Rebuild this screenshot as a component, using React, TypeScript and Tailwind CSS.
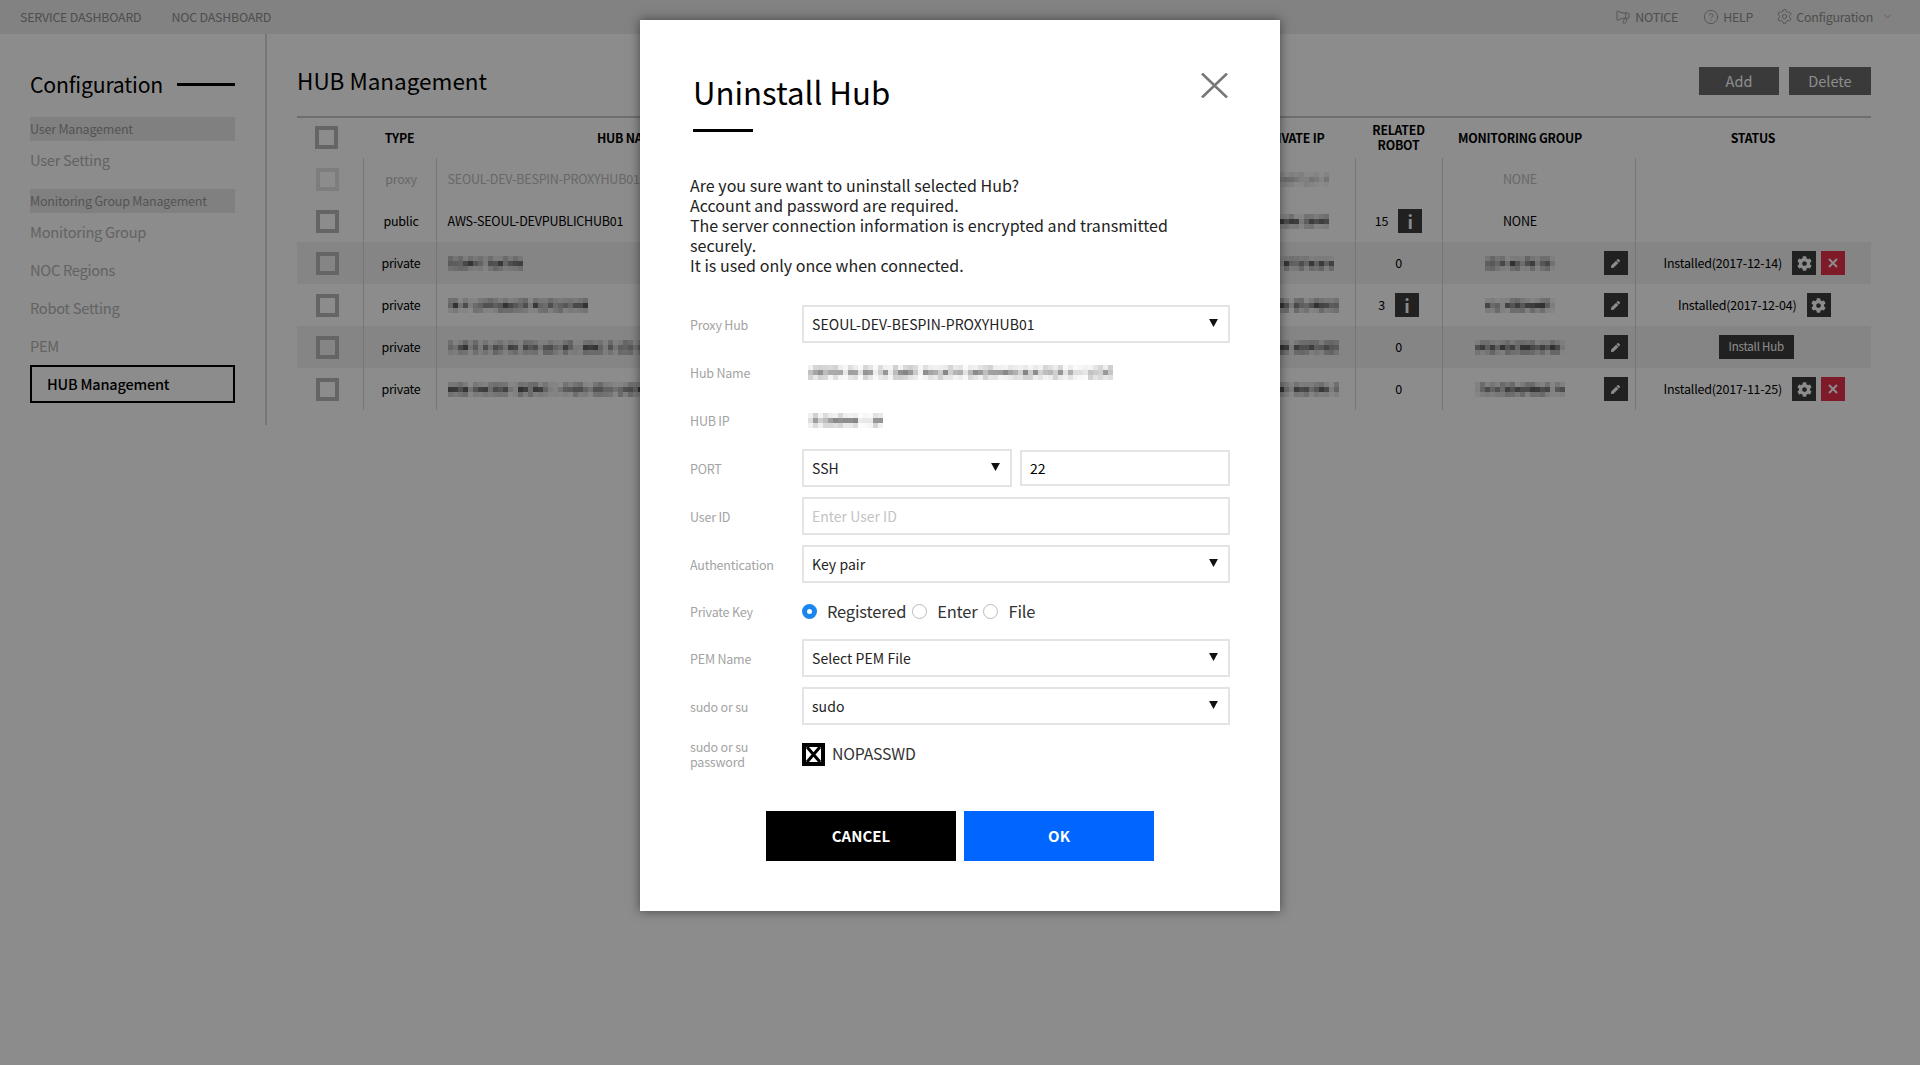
// App.tsx
import React from "react";
import { ChevronDown, CircleHelp, Megaphone, Settings } from "lucide-react";
import { FaCog, FaPen } from "react-icons/fa";

// pixel mosaic for the values that are blurred out in the screenshot
const Redacted: React.FC<{ width: number; seed: number; light?: boolean }> = ({ width, seed, light }) => {
  const cols = Math.floor(width / 5);
  const noise = (n: number) => {
    const x = Math.sin(seed * 37.7 + n * 12.9898) * 43758.5453;
    return x - Math.floor(x);
  };
  const cells = [...Array(cols * 3)].map((_, i) => {
    const col = i % cols;
    const row = Math.floor(i / cols);
    // every few columns the "text" has a gap between words
    const gap = noise(col + 500) < 0.18 ? 0.3 : 1;
    const base = row === 1 ? 0.22 + noise(i) * 0.42 : 0.05 + noise(i) * 0.2;
    return (light ? base * 0.75 : base) * gap;
  });
  return (
    <div className="grid shrink-0 blur-[0.6px]" style={{ gridTemplateColumns: `repeat(${cols}, 5px)` }}>
      {cells.map((o, i) => (
        <span key={i} className="block h-[5px] bg-black" style={{ opacity: o }} />
      ))}
    </div>
  );
};

const IconBtn: React.FC<{ red?: boolean; children: React.ReactNode }> = ({ red, children }) => (
  <span className={`flex h-6 w-6 shrink-0 items-center justify-center text-white ${red ? "bg-[#e8304a]" : "bg-[#3c3c3c]"}`}>
    {children}
  </span>
);

const CheckBox = () => <span className="block h-[23px] w-[23px] border-[4px] border-[#b8b8b8]" />;

const InfoBtn = () => <IconBtn><span className="text-[18px] font-bold leading-none">i</span></IconBtn>;
const PenBtn = () => <IconBtn><FaPen className="h-[9px] w-[9px]" /></IconBtn>;
const GearBtn = () => <IconBtn><FaCog className="h-[15px] w-[15px]" /></IconBtn>;
const CloseBtn = () => (
  <IconBtn red>
    <svg viewBox="0 0 10 10" className="h-[10px] w-[10px]"><path d="M1 1l8 8M9 1l-8 8" stroke="currentColor" strokeWidth="2" /></svg>
  </IconBtn>
);

interface HubRow {
  type: string;
  hub: React.ReactNode;
  ip: number;
  robot?: string;
  info?: boolean;
  group: React.ReactNode;
  edit?: boolean;
  status?: React.ReactNode;
  disabled?: boolean;
}

const Installed: React.FC<{ date: string; remove?: boolean }> = ({ date, remove }) => (
  <div className="flex items-center justify-center pl-[2px]">
    <span className="mr-[10px]">Installed({date})</span>
    <GearBtn />
    {remove && <span className="ml-[5px]"><CloseBtn /></span>}
  </div>
);

const rows: HubRow[] = [
  { type: "proxy", hub: "SEOUL-DEV-BESPIN-PROXYHUB01", ip: 60, group: "NONE", disabled: true },
  { type: "public", hub: "AWS-SEOUL-DEVPUBLICHUB01", ip: 60, robot: "15", info: true, group: "NONE" },
  { type: "private", hub: <Redacted width={75} seed={1} />, ip: 65, robot: "0", group: <Redacted width={70} seed={5} />, edit: true, status: <Installed date="2017-12-14" remove /> },
  { type: "private", hub: <Redacted width={140} seed={2} />, ip: 70, robot: "3", info: true, group: <Redacted width={70} seed={6} />, edit: true, status: <Installed date="2017-12-04" /> },
  {
    type: "private",
    hub: <Redacted width={210} seed={3} />,
    ip: 70,
    robot: "0",
    group: <Redacted width={90} seed={7} />,
    edit: true,
    status: <div className="flex justify-center pl-[6px]"><span className="flex h-6 w-[75px] items-center justify-center bg-[#3c3c3c] text-[11.5px] text-white">Install Hub</span></div>,
  },
  { type: "private", hub: <Redacted width={210} seed={4} />, ip: 70, robot: "0", group: <Redacted width={90} seed={8} />, edit: true, status: <Installed date="2017-11-25" remove /> },
];

const NavGroup: React.FC<{ children: React.ReactNode }> = ({ children }) => (
  <div className="flex h-6 items-center bg-[#e9e9e9] text-[12.5px] tracking-[-0.2px] text-[#9a9a9a]">{children}</div>
);

const NavItem: React.FC<{ children: React.ReactNode }> = ({ children }) => (
  <div className="flex h-[38px] items-center text-[14.7px] tracking-[-0.3px] text-[#b4b4b4]">{children}</div>
);

const Field: React.FC<{ label: React.ReactNode; children: React.ReactNode; h?: string }> = ({ label, children, h = "h-[38px]" }) => (
  <div className={`flex items-center ${h}`}>
    <div className="w-[112px] shrink-0 text-[12.5px] leading-[15px] tracking-[-0.2px] text-[#a3a3a3]">{label}</div>
    <div className="flex min-w-0 flex-1 items-center">{children}</div>
  </div>
);

const Select: React.FC<{ value: string; className?: string }> = ({ value, className = "flex-1" }) => (
  <div className={`flex h-[38px] items-center justify-between border-2 border-[#e4e4e4] pl-[8px] pr-[10px] text-[14px] tracking-[0.05px] text-[#222] ${className}`}>
    <span>{value}</span>
    <svg viewBox="0 0 10 9" className="mb-[3px] h-[8px] w-[9px]"><path d="M0 0h10L5 9z" fill="#111" /></svg>
  </div>
);

const Radio: React.FC<{ checked?: boolean }> = ({ checked }) =>
  checked ? (
    <span className="flex h-[15px] w-[15px] items-center justify-center rounded-full bg-[#1a86ee]"><span className="h-[5px] w-[5px] rounded-full bg-white" /></span>
  ) : (
    <span className="block h-[15px] w-[15px] rounded-full border border-[#bbb]" />
  );

export default function App() {
  return (
    <div className="relative min-h-[1065px] bg-white font-['Noto_Sans_CJK_KR',sans-serif] text-black">
      {/* Top bar */}
      <header className="flex h-[34px] items-center justify-between bg-[#ededed] pl-[20px] pr-[27px] text-[12.4px] tracking-[-0.2px] text-[#8e8e8e]">
        <nav className="flex gap-[30px]">
          <span>SERVICE DASHBOARD</span>
          <span>NOC DASHBOARD</span>
        </nav>
        <div className="flex items-center">
          <Megaphone className="mr-[4px] h-[16px] w-[16px] -scale-x-100" strokeWidth={1.25} />
          <span>NOTICE</span>
          <CircleHelp className="ml-[25px] mr-[4px] h-[16px] w-[16px]" strokeWidth={1.25} />
          <span>HELP</span>
          <Settings className="ml-[23px] mr-[3px] h-[17px] w-[17px]" strokeWidth={1.25} />
          <span>Configuration</span>
          <ChevronDown className="ml-[9px] h-[11px] w-[11px]" strokeWidth={1.5} />
        </div>
      </header>

      <div className="flex">
        {/* Sidebar */}
        <aside className="h-[391px] w-[267px] shrink-0 border-r-2 border-[#d8d8d8] px-[30px] pt-[33px]">
          <div className="mb-[16px] flex h-[34px] items-center gap-[14px]">
            <span className="text-[21.2px] leading-none tracking-[-0.2px]">Configuration</span>
            <span className="h-[3px] flex-1 bg-black" />
          </div>
          <NavGroup>User Management</NavGroup>
          <NavItem>User Setting</NavItem>
          <div className="h-[10px]" />
          <NavGroup>Monitoring Group Management</NavGroup>
          <NavItem>Monitoring Group</NavItem>
          <NavItem>NOC Regions</NavItem>
          <NavItem>Robot Setting</NavItem>
          <NavItem>PEM</NavItem>
          <div className="flex h-[38px] items-center border-2 border-black pl-[15px] text-[14.5px] font-medium tracking-[-0.2px]">HUB Management</div>
        </aside>

        {/* Main */}
        <main className="w-[1604px] pl-[30px]">
          <div className="flex h-[82px] items-start justify-between pt-[32px]">
            <h1 className="text-[22.5px] font-normal leading-[28px]">HUB Management</h1>
            <div className="mt-[1px] flex gap-[10px]">
              <button className="h-[28px] w-[80px] bg-[#6a6a6a] text-[14.5px] text-white">Add</button>
              <button className="h-[28px] w-[82px] bg-[#6a6a6a] text-[14.5px] text-white">Delete</button>
            </div>
          </div>

          <table className="w-full table-fixed border-t-[2px] border-[#c8c8c8] text-[12.5px] tracking-[-0.2px]">
            <colgroup>
              <col className="w-[66px]" />
              <col className="w-[73px]" />
              <col className="w-[392px]" />
              <col className="w-[391px]" />
              <col className="w-[136px]" />
              <col className="w-[87px]" />
              <col className="w-[193px]" />
              <col className="w-[236px]" />
            </colgroup>
            <thead>
              <tr className="h-[41px] text-[12.3px] font-bold leading-[15px]">
                <th className="pb-[2px] pl-[18px]"><CheckBox /></th>
                <th>TYPE</th>
                <th className="pr-[7px]">HUB NAME</th>
                <th />
                <th className="pl-[12px]">PRIVATE IP</th>
                <th>RELATED<br />ROBOT</th>
                <th className="pr-[37px]">MONITORING GROUP</th>
                <th>STATUS</th>
              </tr>
            </thead>
            <tbody>
              {rows.map((r, i) => (
                <tr key={i} className={`h-[42px] ${i % 2 === 0 && i > 0 ? "bg-[#f3f3f3]" : ""} ${r.disabled ? "text-[#bdbdbd]" : ""}`}>
                  <td className={`pl-[19px] ${r.disabled ? "opacity-40" : ""}`}><CheckBox /></td>
                  <td className="border-l border-[#d8d8d8] pl-[3px] text-center">{r.type}</td>
                  <td className="overflow-hidden whitespace-nowrap border-l border-[#d8d8d8] pl-[11px]">{r.hub}</td>
                  <td />
                  <td className="pl-[50px]">
                    <div className={r.disabled ? "opacity-40" : ""}><Redacted width={r.ip} seed={i + 11} /></div>
                  </td>
                  <td className="border-l border-[#d8d8d8]">
                    <div className="flex items-center justify-center gap-[10px]">
                      {r.robot && <span>{r.robot}</span>}
                      {r.info && <InfoBtn />}
                    </div>
                  </td>
                  <td className="border-l border-[#d8d8d8] pr-[7px]">
                    <div className="flex items-center gap-[6px]">
                      <div className="flex flex-1 justify-center">{r.group}</div>
                      {r.edit && <PenBtn />}
                      {!r.edit && <span className="w-6" />}
                    </div>
                  </td>
                  <td className="border-l border-[#d8d8d8]">{r.status}</td>
                </tr>
              ))}
            </tbody>
          </table>
        </main>
      </div>

      {/* Dim layer + modal */}
      <div className="absolute inset-0 flex justify-center bg-black/45 pt-[20px]">
        <section className="h-[891px] w-[640px] bg-white px-[50px] shadow-[0_0_10px_rgba(0,0,0,0.5)]">
          <div className="relative">
            <h2 className="pl-[3px] pt-[49px] text-[31.2px] font-normal leading-[46px]">Uninstall Hub</h2>
            <div className="ml-[3px] mt-[14px] h-[3px] w-[60px] bg-black" />
            <svg viewBox="0 0 27 25" className="absolute right-[2px] top-[53px] h-[25px] w-[27px]"><path d="M1 0.5l25 24M26 0.5l-25 24" stroke="#777" strokeWidth="2.6" fill="none" /></svg>
          </div>

          <p className="mt-[43px] text-[16px] leading-[20px] tracking-[0.03px] text-[#222]">
            Are you sure want to uninstall selected Hub?<br />
            Account and password are required.<br />
            The server connection information is encrypted and transmitted<br />
            securely.<br />
            It is used only once when connected.
          </p>

          <div className="mt-[30px] flex flex-col gap-[10px]">
            <Field label="Proxy Hub"><Select value="SEOUL-DEV-BESPIN-PROXYHUB01" /></Field>
            <Field label="Hub Name"><div className="pl-[6px]"><Redacted width={305} seed={21} light /></div></Field>
            <Field label="HUB IP"><div className="pl-[6px]"><Redacted width={75} seed={22} light /></div></Field>
            <Field label="PORT">
              <Select value="SSH" className="w-[210px]" />
              <div className="ml-[8px] flex h-[36px] flex-1 items-center border-2 border-[#e4e4e4] pl-[8px] text-[14px]">22</div>
            </Field>
            <Field label="User ID">
              <div className="flex h-[38px] flex-1 items-center border-2 border-[#e4e4e4] pl-[8px] text-[14px] text-[#c4c4c4]">Enter User ID</div>
            </Field>
            <Field label="Authentication"><Select value="Key pair" /></Field>
            <Field label="Private Key" h="h-[36px]">
              <div className="flex items-center text-[16.5px] tracking-[-0.2px] text-[#333]">
                <Radio checked />
                <span className="ml-[10px] mr-[6px]">Registered</span>
                <Radio />
                <span className="ml-[10px] mr-[6px]">Enter</span>
                <Radio />
                <span className="ml-[10px]">File</span>
              </div>
            </Field>
            <Field label="PEM Name"><Select value="Select PEM File" /></Field>
            <Field label="sudo or su"><Select value="sudo" /></Field>
            <Field label={<>sudo or su<br />password</>}>
              <div className="flex items-center text-[15.8px] tracking-[-0.2px] text-[#333]">
                <svg viewBox="0 0 23 23" className="mr-[7px] h-[23px] w-[23px]">
                  <rect x="2" y="2" width="19" height="19" fill="#fff" stroke="#000" strokeWidth="4" />
                  <path d="M5 4l13 15M18 4L5 19" stroke="#000" strokeWidth="3" />
                </svg>
                NOPASSWD
              </div>
            </Field>
          </div>

          <div className="mt-[38px] flex justify-center gap-[8px]">
            <button className="h-[50px] w-[190px] bg-black text-[15px] font-bold text-white">CANCEL</button>
            <button className="h-[50px] w-[190px] bg-[#0066ff] text-[15px] font-bold text-white">OK</button>
          </div>
        </section>
      </div>
    </div>
  );
}
